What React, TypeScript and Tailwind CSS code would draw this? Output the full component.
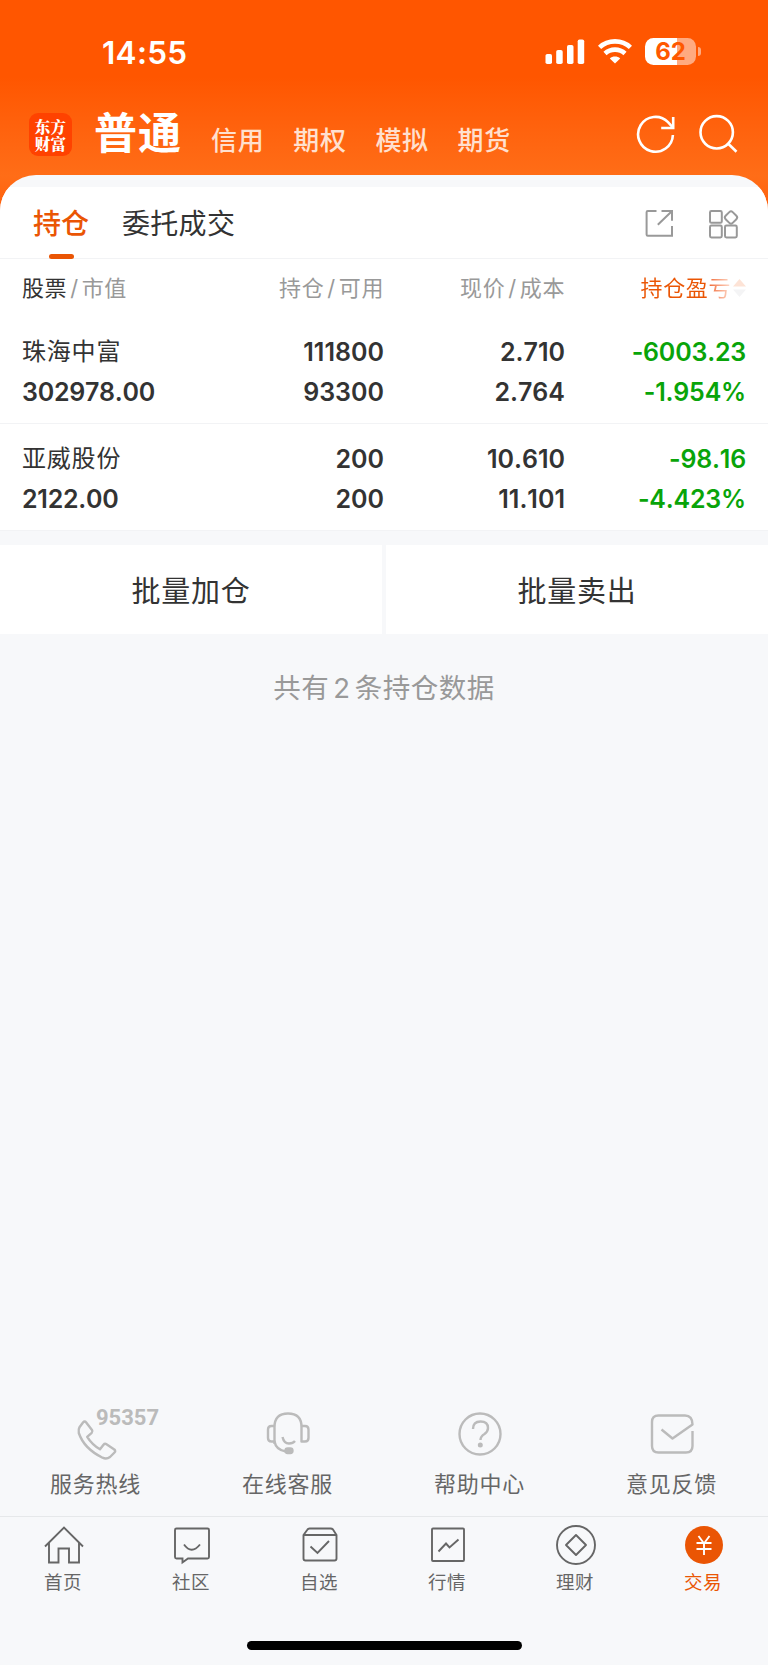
import React from "react";

interface Holding {
    name: string;
    marketValue: string;
    amount: string;
    available: string;
    price: string;
    cost: string;
    profit: string;
    profitRate: string;
}

const holdings: Holding[] = [
    {
        name: "珠海中富",
        marketValue: "302978.00",
        amount: "111800",
        available: "93300",
        price: "2.710",
        cost: "2.764",
        profit: "-6003.23",
        profitRate: "-1.954%",
    },
    {
        name: "亚威股份",
        marketValue: "2122.00",
        amount: "200",
        available: "200",
        price: "10.610",
        cost: "11.101",
        profit: "-98.16",
        profitRate: "-4.423%",
    },
];

const accountTabs = ["信用", "期权", "模拟", "期货"];

const StatusBar = () => (
    <div className="flex h-[105px] items-start justify-between pl-[102px] pr-[67px]">
        <div className="mt-[34px] text-[31.5px] leading-[38px] font-semibold tracking-[0.3px] text-white">14:55</div>
        <div className="mt-[38px] flex items-center">
            <svg className="h-[27px] w-[40px]" viewBox="0 0 40 27" fill="#fff">
                <rect x="0.5" y="16" width="6.5" height="10" rx="1.8" />
                <rect x="11.2" y="12" width="6.5" height="14" rx="1.8" />
                <rect x="22" y="7" width="6.5" height="19" rx="1.8" />
                <rect x="32.7" y="1.5" width="6.5" height="24.5" rx="1.8" />
            </svg>
            <svg className="ml-[12px] h-[27px] w-[36px]" viewBox="0 0 36 27" fill="none" stroke="#fff" strokeWidth="4.6">
                <path d="M2.6 9.4C11 1.4 25 1.4 33.4 9.4" />
                <path d="M8 15.5C13.6 10.3 22.4 10.3 28 15.5" />
                <path d="M18 25.6L12.8 20.4C15.6 17.9 20.4 17.9 23.2 20.4Z" fill="#fff" stroke="none" />
            </svg>
            <div className="ml-[12px] flex items-center">
                <div className="flex h-[27px] w-[51px] items-center justify-center rounded-[8.5px] bg-linear-to-r from-white from-[63%] to-[#ffaa80] to-[63%] pt-px text-[24px] leading-none font-bold text-[#ff5800]">
                    62
                </div>
                <div className="ml-[1.5px] h-[9px] w-[3.5px] rounded-r-full bg-[#ffaa80]" />
            </div>
        </div>
    </div>
);

const Header = () => (
    <div className="flex h-[70px] items-start pl-[29px] pr-[30px]">
        <div className="mt-[8px] flex h-[43px] w-[43px] items-center justify-center rounded-[9px] bg-[#ff4200] font-['Noto_Serif_CJK_SC','Noto_Sans_CJK_SC',serif] text-[15.5px] leading-[17px] font-black tracking-[0.3px] text-white">
            <p>
                东方
                <br />
                财富
            </p>
        </div>
        <div className="ml-[22px] text-[43px] leading-[56px] font-bold tracking-[1px] text-white">普通</div>
        <div className="mt-[17px] ml-[29px] flex gap-[28.8px] text-[26px] leading-[38px] font-medium tracking-[0.7px] text-[#ffe0cf]">
            {accountTabs.map((tab) => (
                <span key={tab}>{tab}</span>
            ))}
        </div>
        <div className="mt-[9px] ml-auto flex gap-[22px]">
            <svg className="h-[40px] w-[40px]" viewBox="0 0 40 40" fill="none" stroke="#fff" strokeWidth="2.6">
                <path d="M36.9 21A17.4 17.4 0 1 1 32 8.2L37 13.6" />
                <path d="M37.2 3V14H25.2" />
            </svg>
            <svg className="h-[40px] w-[40px]" viewBox="0 0 40 40" fill="none" stroke="#fff" strokeWidth="2.6">
                <circle cx="18.7" cy="18.3" r="16.2" />
                <path d="M29.5 29L38.5 37.7" />
            </svg>
        </div>
    </div>
);

const SectionTabs = () => (
    <div className="flex h-[72px] items-start border-b border-[#f2f3f5] bg-white pl-[33px] pr-[28px]">
        <div className="flex flex-col items-center">
            <span className="mt-[17px] text-[28px] leading-[40px] font-medium text-[#ea5504]">持仓</span>
            <span className="mt-[10px] h-[5px] w-[25px] rounded-full bg-[#ea5504]" />
        </div>
        <span className="mt-[17px] ml-[33px] text-[28px] leading-[40px] tracking-[0.3px] text-[#333]">委托成交</span>
        <div className="mt-[20px] ml-auto flex gap-[32px]">
            <svg className="h-[32px] w-[32px]" viewBox="0 0 32 32" fill="none" stroke="#999" strokeWidth="2">
                <path d="M12.5 4H3.8Q2.6 4 2.6 5.200V27.5Q2.6 28.7 3.8 28.7H28V19" />
                <path d="M17.5 4H28V13.8M27.8 4.2L13.8 17.8" />
            </svg>
            <svg className="h-[32px] w-[32px]" viewBox="0 0 32 32" fill="none" stroke="#999" strokeWidth="2">
                <rect x="2" y="4" width="11.8" height="11.8" rx="1.4" />
                <rect x="2" y="18.600" width="11.8" height="11.8" rx="1.4" />
                <rect x="17" y="18.600" width="11.8" height="11.8" rx="1.4" />
                <rect x="18" y="5.500" width="10" height="10" rx="2.4" transform="rotate(45 23 10.5)" />
            </svg>
        </div>
    </div>
);

const ColumnHeader = () => (
    <div className="grid h-[58px] grid-cols-[154px_208px_181px_1fr] pt-[13px] pr-[22px] pl-[22px] text-[22px] leading-[32px] tracking-[0.6px] text-[#999]">
        <div className="whitespace-nowrap">
            <span className="text-[#333]">股票</span>
            <span className="mx-[3px]">/</span>市值
        </div>
        <div className="text-right">
            持仓<span className="mx-[3px]">/</span>可用
        </div>
        <div className="text-right">
            现价<span className="mx-[3px]">/</span>成本
        </div>
        <div className="flex h-[32px] items-center justify-end">
            <span className="bg-linear-to-r from-[#ea5504] from-[72%] to-[#fbdccd] bg-clip-text text-transparent">持仓盈亏</span>
            <svg className="ml-[2px] h-[20px] w-[13px]" viewBox="0 0 13 20">
                <path d="M0 8.5L6.5 1L13 8.5Z" fill="#fde3d6" />
                <path d="M0 11.5L6.5 19L13 11.5Z" fill="#f4f4f5" />
            </svg>
        </div>
    </div>
);

const HoldingRow = ({ item }: { item: Holding }) => (
    <div className="grid h-[107px] grid-cols-[154px_208px_181px_1fr] grid-rows-[40px_40px] border-b border-[#f2f3f5] pt-[15px] pr-[22px] pl-[22px] text-[25px] leading-[40px] font-semibold text-[#333] [font-kerning:none]">
        <div className="text-[24px] font-normal tracking-[0.8px]">{item.name}</div>
        <div className="text-right">{item.amount}</div>
        <div className="text-right">{item.price}</div>
        <div className="text-right tracking-[-0.2px] text-[#09a409]">{item.profit}</div>
        <div className="tracking-[-0.25px]">{item.marketValue}</div>
        <div className="text-right">{item.available}</div>
        <div className="text-right">{item.cost}</div>
        <div className="text-right tracking-[-0.2px] text-[#09a409]">{item.profitRate}</div>
    </div>
);

const services = [
    {
        label: "服务热线",
        icon: (
            <path d="M13 13.5Q14.700 11.500 16.200 13.500L22 21Q23 22.500 21.700 23.800L17.200 27.800Q22 35.500 30 40.300L33.500 35.800Q34.800 34.200 36.500 35.300L44.300 40.500Q46 42 44.500 43.500L40 48Q36.500 50.500 32.500 48.700Q14 39.500 8.800 24Q8.200 20.500 9.500 18.200Z" />
        ),
    },
    {
        label: "在线客服",
        icon: (
            <>
                <path d="M12.5 35V18Q12.5 4.5 26 4.5Q39.5 4.5 39.5 18V32.5H43Q46.5 32.5 46.5 29V20.5Q46.5 17 43 17H39.5" />
                <path d="M12.5 17H9.5Q6 17 6 20.5V29Q6 32.5 9.5 32.5H12.5Q14 41 24 42.5" />
                <path d="M20.5 28Q22 34.500 27 34.500Q31 34.500 33 32" />
                <rect x="23.5" y="39.5" width="7" height="4.5" rx="2.2" fill="#bbb" />
            </>
        ),
    },
    {
        label: "帮助中心",
        icon: (
            <>
                <circle cx="26" cy="25" r="20.5" />
                <path d="M19 20Q19 12.5 26.5 12.5Q34 12.5 34 19Q34 22.5 30.5 25Q26.5 27.5 26.5 31" />
                <circle cx="26.3" cy="36" r="1.3" fill="#bbb" />
            </>
        ),
    },
    {
        label: "意见反馈",
        icon: (
            <path d="M15.5 20.5L26.5 29.5L46.5 15.5Q46.5 6.5 39 6.5H12.5Q6 6.5 6 13V37Q6 43.5 12.5 43.5H40Q46.5 43.5 46.5 37V22" />
        ),
    },
];

const navItems = [
    {
        label: "首页",
        icon: <path d="M2 22.5L21 3.5L40 22.5M6 19V38.5H15.5V24.5H26V38.5H36V19" />,
    },
    {
        label: "社区",
        icon: (
            <>
                <path d="M5.5 4.5H36.5Q38 4.5 38 6V33Q38 34.5 36.5 34.5H17L11.5 38.5V34.5H5.5Q4 34.5 4 33V6Q4 4.5 5.5 4.5Z" />
                <path d="M13 20.5Q20.5 31 29 20.5" />
            </>
        ),
    },
    {
        label: "自选",
        icon: (
            <>
                <path d="M4.5 11L8.5 5.5Q9 4.5 10.5 4.5H31.5Q33 4.5 34 5.5L37.5 11V34.5Q37.5 36.5 35.5 36.5H6.5Q4.5 36.5 4.5 34.5ZM4.5 11H37.5" />
                <path d="M11.5 22.5L18.5 29L30 17" />
            </>
        ),
    },
    {
        label: "行情",
        icon: (
            <>
                <rect x="5" y="4.5" width="32" height="32.5" rx="1" />
                <path d="M11.5 27.5L19 19.5L22.5 23.5L31.5 15.5" />
            </>
        ),
    },
    {
        label: "理财",
        icon: (
            <>
                <circle cx="21" cy="21" r="19" />
                <path d="M21 11L31 21L21 31L11 21Z" strokeLinejoin="round" />
            </>
        ),
    },
    {
        label: "交易",
        active: true,
        icon: (
            <>
                <circle cx="21" cy="21" r="19" fill="#ea5504" stroke="none" />
                <path d="M15.5 12L21 19.5L26.5 12M21 19.5V31M13.5 19H28.5M13.5 25H28.5" stroke="#fff" />
            </>
        ),
    },
];

const ServiceBar = () => (
    <div className="flex h-[107px]">
        {services.map((service, i) => (
            <div key={service.label} className="relative flex flex-1 flex-col items-center">
                <svg className="h-[50px] w-[52px] overflow-visible" viewBox="0 0 52 50" fill="none" stroke="#bbb" strokeWidth="2.4" strokeLinejoin="round">
                    {service.icon}
                </svg>
                {i === 0 && (
                    <span className="absolute top-[-3px] left-[96px] font-['Roboto','Liberation_Sans',sans-serif] text-[22px] leading-[24px] font-bold text-[#bbb]">
                        95357
                    </span>
                )}
                <span className="mt-[9px] mr-[1px] text-[22px] leading-[32px] tracking-[0.7px] text-[#666]">{service.label}</span>
            </div>
        ))}
    </div>
);

const BottomNav = () => (
    <div className="flex h-[149px] flex-col items-center border-t border-[#e6e8ea]">
        <div className="flex w-full pt-[7px]">
            {navItems.map((item) => (
                <div key={item.label} className="flex flex-1 flex-col items-center">
                    <svg className="h-[42px] w-[42px]" viewBox="0 0 42 42" fill="none" stroke="#666" strokeWidth="1.9">
                        {item.icon}
                    </svg>
                    <span className={`mt-[2px] mr-[2px] text-[18.5px] leading-[28px] tracking-[0.6px] ${item.active ? "text-[#ea5504]" : "text-[#666]"}`}>
                        {item.label}
                    </span>
                </div>
            ))}
        </div>
        <div className="mt-[45px] h-[9px] w-[275px] rounded-full bg-black" />
    </div>
);

export default function App() {
    return (
        <div className="flex h-[1665px] w-[768px] flex-col overflow-hidden bg-[#f7f8fa] font-['Inter','Noto_Sans_CJK_SC',sans-serif]">
            <div className="bg-linear-to-b from-[#ff5600] from-[30%] via-[#ff6d17] via-[68%] to-[#ff5600] to-[90%]">
                <StatusBar />
                <Header />
                <div className="overflow-hidden rounded-t-[36px] bg-[#f7f8fa] pt-[12px]">
                    <SectionTabs />
                </div>
            </div>

            <div className="bg-white">
                <ColumnHeader />
                {holdings.map((item) => (
                    <HoldingRow key={item.name} item={item} />
                ))}
            </div>

            <div className="mt-[14px] flex h-[89px] gap-[4px] text-[29px] tracking-[0.8px] text-[#333]">
                <button className="w-[382px] bg-white pt-[4px]">批量加仓</button>
                <button className="flex-1 bg-white pt-[4px]">批量卖出</button>
            </div>
            <div className="mt-[34px] text-center text-[27.5px] leading-[40px] tracking-[0.5px] text-[#999]">
                共有<span className="mx-[4px]">2</span>条持仓数据
            </div>

            <div className="mt-auto">
                <ServiceBar />
                <BottomNav />
            </div>
        </div>
    );
}
